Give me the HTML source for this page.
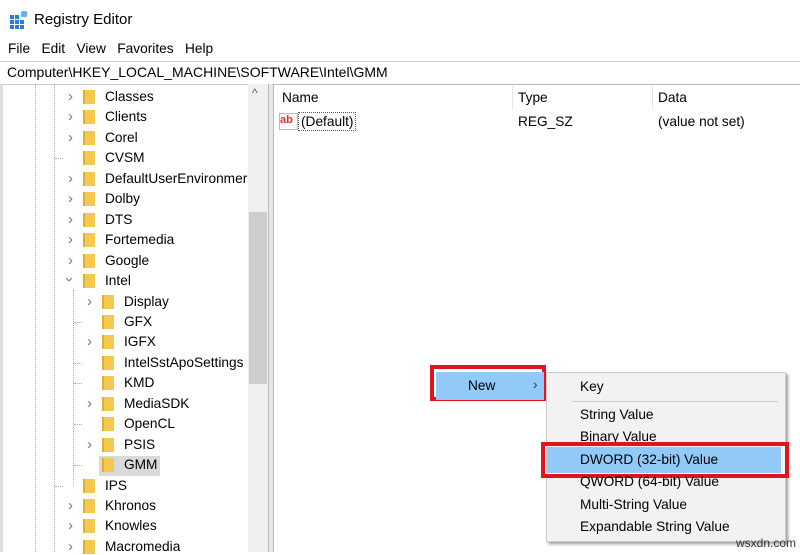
<!DOCTYPE html><html><head><style>
body{margin:0;width:800px;height:552px;overflow:hidden;background:#fff;font-family:"Liberation Sans",sans-serif;font-size:13.7px;color:#000;position:relative}
.a{position:absolute;white-space:nowrap}
.fd{position:absolute;width:10px;height:14px;background:#f3c94f;border-left:2px solid #e2ae2c}
.ch{position:absolute;color:#777;font-size:15px}
.t{position:absolute}
</style></head><body>
<div class="a" style="left:10px;top:11px;width:18px;height:18px">
<svg width="18" height="18"><g fill="#2a7fd4"><rect x="0" y="4" width="4" height="4"/><rect x="5" y="4" width="4" height="4"/><rect x="0" y="9" width="4" height="4"/><rect x="5" y="9" width="4" height="4"/><rect x="10" y="9" width="4" height="4"/><rect x="0" y="14" width="4" height="4"/><rect x="5" y="14" width="4" height="4"/><rect x="10" y="14" width="4" height="4"/></g><rect x="11" y="0" width="6" height="6" fill="#5fb0f0" transform="rotate(10 14 3)"/></svg></div>
<div class="a" style="left:34px;top:11px;font-size:15px">Registry Editor</div>
<div class="a" style="left:8px;top:41px">File&nbsp;&nbsp; Edit&nbsp;&nbsp; View&nbsp;&nbsp; Favorites&nbsp;&nbsp; Help</div>
<div class="a" style="left:0;top:61px;width:800px;height:22px;border-top:1px solid #ccc;border-bottom:1px solid #ccc"></div>
<div class="a" style="left:7px;top:64px;font-size:14px">Computer\HKEY_LOCAL_MACHINE\SOFTWARE\Intel\GMM</div>
<div class="a" style="left:0;top:84px;width:3px;height:468px;background:#ddd"></div>
<div class="a" style="left:35px;top:84px;height:468px;border-left:1px dotted #aaa"></div>
<div class="a" style="left:54px;top:84px;height:468px;border-left:1px dotted #aaa"></div>
<div class="a" style="left:73px;top:290px;height:196px;border-left:1px dotted #aaa"></div>
<div class="a" style="left:248px;top:84px;width:20px;height:468px;background:#f0f0f0"></div>
<div class="a" style="left:249px;top:212px;width:18px;height:172px;background:#cdcdcd"></div>
<div class="a" style="left:252px;top:86px;color:#555;font-size:12px">^</div>
<div class="a" style="left:268px;top:84px;width:4px;height:468px;background:#e6e6e6;border-left:1px solid #bbb;border-right:1px solid #bbb"></div>
<div class="a" style="left:99px;top:456px;width:61px;height:20px;background:#d9d9d9"></div>
<div id="tree"></div>
<div class="a" style="left:272px;top:84px;width:528px;height:3px;border-top:1px solid #bbb"></div>
<div class="a" style="left:282px;top:90px">Name</div>
<div class="a" style="left:512px;top:86px;height:24px;border-left:1px solid #e5e5e5"></div>
<div class="a" style="left:518px;top:90px">Type</div>
<div class="a" style="left:652px;top:86px;height:24px;border-left:1px solid #e5e5e5"></div>
<div class="a" style="left:658px;top:90px">Data</div>
<div class="a" style="left:279px;top:113px;width:17px;height:15px;background:#fafafa;border:1px solid #bbb;color:#d33;font-size:11px;font-weight:bold;line-height:13px">ab</div>
<div class="a" style="left:298px;top:112px;border:1px dotted #555;padding:1px 2px">(Default)</div>
<div class="a" style="left:518px;top:114px">REG_SZ</div>
<div class="a" style="left:658px;top:114px">(value not set)</div>
<div class="a" style="left:430px;top:365px;width:116px;height:36px;border:4px solid #e0141d;box-sizing:border-box"></div>
<div class="a" style="left:436px;top:372px;width:108px;height:28px;background:#91c9f7"></div>
<div class="a" style="left:468px;top:378px">New</div>
<div class="a" style="left:533px;top:377px;color:#333">›</div>
<div class="a" style="left:546px;top:372px;width:238px;height:168px;background:#f2f2f2;border:1px solid #ccc;box-shadow:2px 2px 3px #999"></div>
<div class="a" style="left:580px;top:379px">Key</div>
<div class="a" style="left:572px;top:401px;width:206px;border-top:1px solid #ccc"></div>
<div class="a" style="left:580px;top:407px">String Value</div>
<div class="a" style="left:580px;top:429px">Binary Value</div>
<div class="a" style="left:547px;top:447px;width:234px;height:26px;background:#91c9f7"></div>
<div class="a" style="left:541px;top:442px;width:248px;height:36px;border:4px solid #e0141d;box-sizing:border-box"></div>
<div class="a" style="left:580px;top:452px">DWORD (32-bit) Value</div>
<div class="a" style="left:580px;top:474px">QWORD (64-bit) Value</div>
<div class="a" style="left:580px;top:497px">Multi-String Value</div>
<div class="a" style="left:580px;top:519px">Expandable String Value</div>
<div class="a" style="left:736px;top:536px;font-size:12px;color:#333">wsxdn.com</div>
<script>
var r=[["Classes",1,1],["Clients",1,1],["Corel",1,1],["CVSM",1,0],["DefaultUserEnvironmer",1,1],["Dolby",1,1],["DTS",1,1],["Fortemedia",1,1],["Google",1,1],["Intel",1,2],["Display",2,1],["GFX",2,0],["IGFX",2,1],["IntelSstApoSettings",2,0],["KMD",2,0],["MediaSDK",2,1],["OpenCL",2,0],["PSIS",2,1],["GMM",2,0],["IPS",1,0],["Khronos",1,1],["Knowles",1,1],["Macromedia",1,1]];
var h="";r.forEach(function(e,i){var y=88+i*20.45;var o=e[1]==1?0:19;
if(e[2]==1)h+='<div class="ch" style="left:'+(68+o)+'px;top:'+(y)+'px">›</div>';
else if(e[2]==2)h+='<div class="ch" style="left:67px;top:'+(y-1)+'px;transform:rotate(90deg)">›</div>';
else h+='<div class="a" style="left:'+(55+o)+'px;top:'+(y+9)+'px;width:8px;border-top:1px dotted #aaa"></div>';
h+='<div class="fd" style="left:'+(83+o)+'px;top:'+(y+2)+'px"></div><div class="t" style="left:'+(105+o)+'px;top:'+(y+1)+'px">'+e[0]+'</div>';});
document.getElementById("tree").innerHTML=h;
</script>
</body></html>
